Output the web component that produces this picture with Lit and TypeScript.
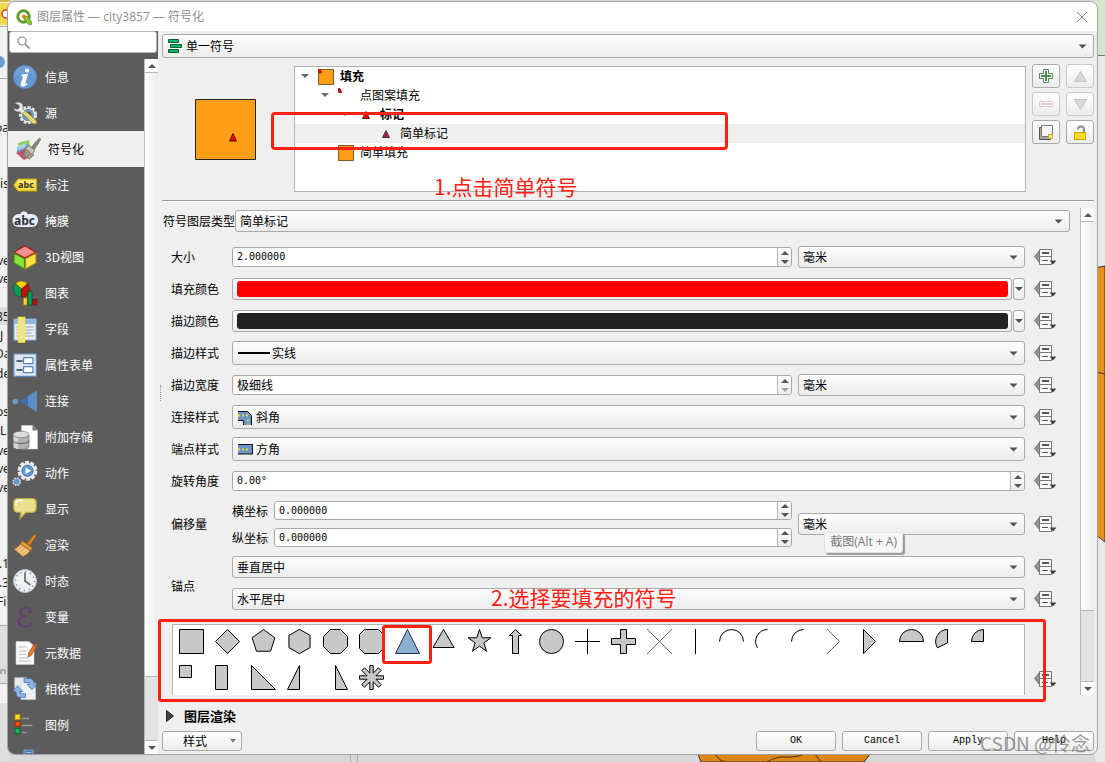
import { LitElement, html, css, svg, nothing } from "lit";
import { customElement, property, state } from "lit/decorators.js";
import { classMap } from "lit/directives/class-map.js";

const base = css`
  *, *::before, *::after { box-sizing: border-box; }
  :host { box-sizing: border-box; font-family: "Noto Sans CJK SC", sans-serif; font-size: 12px; line-height: 16px; color: #000; }
  button, input, select { font: inherit; color: inherit; margin: 0; padding: 0; }
  svg { display: block; flex: none; }
`;

/* ---------- icons ---------- */

const navIcons: Record<string, unknown> = {
  info: svg`<circle cx="12" cy="12" r="11.7" fill="#6597d0" stroke="#4f7fb8" stroke-width=".6"/>
    <path d="M1 12a11 11 0 0 1 22 0c-4-5-14-5-22 0z" fill="#7aa7db" opacity=".5"/>
    <circle cx="14" cy="5.6" r="2.1" fill="#fff"/>
    <path d="M8.500 9.500l6.600-.8-2.800 9.600c-.2.8.3.8 1.600-.2l.6.8c-1.800 1.900-3.500 2.600-5 2.600-1.800 0-2.300-1.100-1.800-2.700l2-6.300c.2-.8-.2-1.200-1.200-1.400z" fill="#fff"/>`,
  source: svg`<circle cx="15" cy="14" r="7.600" fill="none" stroke="#e4e4e4" stroke-width="3" stroke-dasharray="3 1.400"/>
    <circle cx="15" cy="14" r="6.600" fill="#5c5c5c" stroke="#e4e4e4" stroke-width="1.400"/>
    <circle cx="15" cy="14" r="4.600" fill="none" stroke="#6c9bd0" stroke-width="2.200"/>
    <path d="M2 2.500c2-2 6-1.500 7.500 1.200.7 1.500.6 2.800.2 4l3.300 3.300-2.800 2.800-3.200-3.200c-2.400.8-5.500-.2-6.500-3.300l3.700 1.200 2.300-1.800-.4-2.800z" fill="#e9e9e9" stroke="#777" stroke-width=".5"/>
    <path d="M9.500 12.500l3-2.300L23 19.500l.5 3-3.500.3z" fill="#f0e38c" stroke="#9c8b2c" stroke-width=".9"/>
    <path d="M12 13l9 7.500" stroke="#c9b850"/>`,
  symbology: svg`<path d="M2 6l11-3 1 6-11 3z" fill="#8fcb62"/>
    <path d="M1 10l11-3 0 6-11 3z" fill="#69a9d8"/>
    <path d="M0 16l9-4 4 8-5 3z" fill="#c0506f"/>
    <path d="M2 9l8-3-1 5-8 2z" fill="#d9edf8" opacity=".6"/>
    <path d="M9 10.500l9 7.500-4.500 4-7-3.500c2-2 2.500-4 2.500-8z" fill="#a69f8d" stroke="#6f6a5c" stroke-width=".8"/>
    <path d="M11 15l-2.500 4M13.300 16.500l-2.500 4" stroke="#6f6a5c" stroke-width=".8"/>
    <path d="M9.500 11.500l3.500-3 6 5-3 4z" fill="#c8c2b0" stroke="#77715f" stroke-width=".8"/>
    <path d="M15.500 10L23.200 1.200l1.600 1-6.300 10z" fill="#8d8770" stroke="#6f6a5c" stroke-width=".8"/>`,
  labels: svg`<path d="M5 6h18.500v12H5L.7 12z" fill="#f5df3c" stroke="#c59f16" stroke-width="1.200"/>
    <path d="M5.500 7h17v4H3z" fill="#fff27d" opacity=".7"/>
    <text x="5" y="15" class="abc small">abc</text>`,
  mask: svg`<rect x="-.5" y="5" width="25.500" height="13" rx="6" fill="#e7eafb"/>
    <rect x="7.500" y="2.500" width="7" height="8" rx="3" fill="#e7eafb"/>
    <text x="1" y="15.500" class="abc">abc</text>`,
  view3d: svg`<path d="M12 .8l11 6.400L12 13 1 7.200z" fill="#f79092" stroke="#a3181b" stroke-width="1.200"/>
    <path d="M1 8.200l10.500 5.600V24L1 18z" fill="#8be03a" stroke="#4c8a15" stroke-width="1.200"/>
    <path d="M23 8.200l-10.500 5.600V24L23 18z" fill="#fbe347" stroke="#a38c12" stroke-width="1.200"/>`,
  diagrams: svg`<path d="M8.500 8L2.300 2.800A8 8 0 0 1 14.500 2.800z" fill="#f8d100" stroke="#7d6a00" stroke-width=".6"/>
    <path d="M8.500 8L2.300 2.800a8 8 0 0 0 6 13.200z" fill="#0a9b57" stroke="#04502b" stroke-width=".6"/>
    <path d="M8.500 8l6-5.200a8 8 0 0 1-6.200 13.200z" fill="#c11208" stroke="#600903" stroke-width=".6"/>
    <path d="M10.500 17h3.500v7h-3.500z" fill="#fbd52c" stroke="#b38409" stroke-width=".7"/>
    <path d="M15 10.500h4V24h-4z" fill="#0a9b57" stroke="#04502b" stroke-width=".7"/>
    <path d="M19.800 18.500h4V24h-4z" fill="#c11208" stroke="#600903" stroke-width=".7"/>`,
  fields: svg`<path d="M.8 1.800h22.500v21.500H.8z" fill="#e9edf2" stroke="#5f8ab8" stroke-width="1.200"/>
    <path d="M1.500 2.500h21v4.500h-21z" fill="#90b6dc"/>
    <path d="M3.500 10h17M3.500 13h17M3.500 16h15M3.500 19h17" stroke="#94a6ba"/>
    <path d="M5.500.5h6v24.500h-6z" fill="#f0df9a" stroke="#f7ee3a" stroke-width="1.400"/>`,
  form: svg`<path d="M.8.800h22.500v22.500H.8z" fill="#dfe6ee" stroke="#5f8ab8" stroke-width="1.200"/>
    <path d="M3.500 8h6M3.500 17h6" stroke="#5a6673" stroke-width="1.800"/>
    <rect x="10.500" y="4.700" width="9.500" height="6" rx="1" fill="#fff" stroke="#5382b5" stroke-width="1.300"/>
    <rect x="10.500" y="13.700" width="9.500" height="6" rx="1" fill="#fff" stroke="#5382b5" stroke-width="1.300"/>`,
  joins: svg`<circle cx="2.300" cy="12.500" r="2.700" fill="#6b9acb"/>
    <path d="M24 1.500v21.500L6.500 12.300z" fill="#5d8fc5"/><path d="M15 7v10.500l-8.500-5.200z" fill="#3e6fa6"/>`,
  storage: svg`<path d="M8.500.5h11l5 5V24h-16z" fill="#fff" stroke="#d0d0d0" stroke-width=".6"/>
    <path d="M19.500.5l5 5h-5z" fill="#777"/>
    <path d="M0 10v11.500c0 4 16 4 16 0V10z" fill="#b2b2b2" stroke="#666" stroke-width=".7"/>
    <path d="M2 11v12M4 12v12" stroke="#e0e0e0" stroke-width="1.500"/>
    <ellipse cx="8" cy="9.500" rx="8" ry="3.300" fill="#dcdcdc" stroke="#777" stroke-width=".7"/>
    <path d="M0 15.500c0 4 16 4 16 0" fill="none" stroke="#555" stroke-width=".9"/>`,
  actions: svg`<circle cx="14.500" cy="9.800" r="8.700" fill="none" stroke="#ececec" stroke-width="2.600" stroke-dasharray="4 1.470"/>
    <circle cx="14.500" cy="9.800" r="8" fill="#ececec"/>
    <circle cx="14.500" cy="9.800" r="5.700" fill="#6495cc" stroke="#3c6ba0" stroke-width=".8"/>
    <path d="M12.500 6.500l5.500 3.300-5.500 3.300z" fill="#fff"/>
    <circle cx="3.700" cy="20.700" r="3.600" fill="#6495cc" stroke="#dedede" stroke-width="1.500" stroke-dasharray="1.800 1"/>`,
  display: svg`<path d="M5 1.500h14c3 0 4.200 1.500 4.200 4v5.500c0 3-1.500 4.300-4.200 4.300h-6L7 21.500l1-6.200H5C2 15.300.8 14 .8 11V5.500c0-2.500 1.200-4 4.200-4z" fill="#eae08e" stroke="#bfa83e" stroke-width="1.200"/>
    <path d="M3 9V6c0-2 1-2.500 3-2.500h4" fill="none" stroke="#fff" stroke-width="1.300"/>`,
  rendering: svg`<path d="M14 10.500L21.500 1.300l1.800 1.500-6.600 9.500z" fill="#d98a25" stroke="#a5620e" stroke-width=".7"/>
    <path d="M9.500 8l10 7-2 2.500L7.500 10.700z" fill="#e39b3a" stroke="#a5620e" stroke-width=".7"/>
    <path d="M7.300 11l9.500 6.500c-1 2.500-3.500 4.500-7 6L1 16c3-1 5-2.500 6.300-5z" fill="#f4c583" stroke="#b5731d" stroke-width=".9"/>
    <path d="M4 17.500l5-4M6.500 19.500l5-4M9 21.500l4.500-4" stroke="#cf8d3c" stroke-width=".8"/>`,
  temporal: svg`<circle cx="12" cy="12" r="11.400" fill="#f0f2f2" stroke="#c8cccd"/>
    <circle cx="12" cy="12" r="9.400" fill="none" stroke="#5c8fc6" stroke-width="1.600" stroke-dasharray="1.200 3.720"/>
    <path d="M12 3.500V12l5.500 4" fill="none" stroke="#666b6e" stroke-width="1.700"/>`,
  variables: svg`<path d="M18 6C17.500 3.800 16 2.800 13.500 2.800c-4 0-6 1.700-6 4.200 0 2.300 1.700 3.800 4.700 4.200-4 .6-6.500 2.700-6.500 5.600 0 3 2.800 4.500 6.800 4.500 3.500 0 6-1.500 6.500-4.300" fill="none" stroke="#643f6f" stroke-width="2"/>
    <path d="M8.300 4.500c-1.500 2-1 4.500 1.200 6M7 13.500c-2 2-1.700 5 .8 6.500" fill="none" stroke="#643f6f" stroke-width="2.600"/>
    <circle cx="17.200" cy="6.200" r="2" fill="#643f6f"/><path d="M11 11.300h4" stroke="#643f6f" stroke-width="1.800"/>`,
  metadata: svg`<path d="M3 .5h13l5 4.500v18.500H3z" fill="#fafafa" stroke="#ccc" stroke-width=".6"/>
    <path d="M5.500 6h9M5.500 10h9M5.500 13.500h8M5.500 17h9M5.500 20h12" stroke="#c4c4c4" stroke-width="1.200"/>
    <path d="M15.500 12.300L20.500 4l2.800 2-5 8.300-3.200 2z" fill="#e07a34" stroke="#9c4c14" stroke-width=".7"/>
    <path d="M20.500 4l1.200-1.700 2.800 1.800-1.200 1.900z" fill="#c9472c"/>`,
  dependencies: svg`<path d="M1.500.5h12v14h-12z" fill="#e6ebf1"/><path d="M8 6h14.500v16.500H8z" fill="#eef1f4" stroke="#ccc" stroke-width=".5"/>
    <path d="M11 1.500h4.500c4 0 5.500 2 5.500 5.800H24l-5 5.500-5-5.500h3c0-1.300-.8-1.900-2-1.900h-4z" fill="#8db4e6" stroke="#4a75b0" stroke-width=".8"/>
    <path d="M12.500 20.500H8.300c-3.800 0-5.300-2-5.300-6H-.3l5-5.800 5 5.800H6.800c0 1.500.6 2.300 1.800 2.300h3.900z" fill="#8db4e6" stroke="#4a75b0" stroke-width=".8"/>`,
  legend: svg`<path d="M2 1.500h5v5H2z" fill="#fbdc1c" stroke="#c48d00"/>
    <path d="M2 8.500h5v5H2z" fill="#f4500d" stroke="#9c2a00"/>
    <path d="M2 15.500h5v5H2z" fill="#18b35c" stroke="#046b32"/>
    <path d="M9 5.500h7M9 12.500h10.500M9 19.500h4.500" stroke="#9a9a9a" stroke-width="1.500"/>`,
  server: svg`<path d="M11 1h9v8h-9z" fill="#4a78b0" stroke="#7fa9d8"/><path d="M13 3.500h5" stroke="#9fc0e5"/>`,
};

const NAV: [string, string][] = [
  ["info", "信息"], ["source", "源"], ["symbology", "符号化"], ["labels", "标注"], ["mask", "掩膜"],
  ["view3d", "3D视图"], ["diagrams", "图表"], ["fields", "字段"], ["form", "属性表单"], ["joins", "连接"],
  ["storage", "附加存储"], ["actions", "动作"], ["display", "显示"], ["rendering", "渲染"], ["temporal", "时态"],
  ["variables", "变量"], ["metadata", "元数据"], ["dependencies", "相依性"], ["legend", "图例"], ["server", ""],
];

/* Marker shapes in a 27-unit box centred on 13.5. */
const poly = (n: number, r: number, turn = -90) =>
  Array.from({ length: n }, (_, i) => {
    const a = ((turn + (360 / n) * i) * Math.PI) / 180;
    return `${13.5 + r * Math.cos(a)},${13.5 + r * Math.sin(a)}`;
  }).join(" ");
const starPoints = Array.from({ length: 10 }, (_, i) => {
  const a = ((-90 + 36 * i) * Math.PI) / 180;
  const r = i % 2 ? 4.6 : 12;
  return `${13.5 + r * Math.cos(a)},${13.5 + r * Math.sin(a)}`;
}).join(" ");

const SHAPES: [string, unknown][] = [
  ["square", svg`<path d="M1.500 1.500h24v24h-24z"/>`],
  ["diamond", svg`<path d="M13.500 1.500l12 12-12 12-12-12z"/>`],
  ["pentagon", svg`<polygon points=${poly(5, 12)}/>`],
  ["hexagon", svg`<polygon points=${poly(6, 12.2)}/>`],
  ["octagon", svg`<path d="M8.500 1.500h10l7 7v10l-7 7h-10l-7-7v-10z"/>`],
  ["square with corners", svg`<path d="M6.500 1.500h14l5 5v14l-5 5h-14l-5-5v-14z"/>`],
  ["triangle", svg`<path d="M13.500 1.500l12 24h-24z"/>`],
  ["equilateral triangle", svg`<path d="M13.500 1.500l10.500 18H3z"/>`],
  ["star", svg`<polygon points=${starPoints}/>`],
  ["arrow", svg`<path d="M13.500 1.500l6 6h-3v18h-6v-18h-3z"/>`],
  ["circle", svg`<circle cx="13.500" cy="13.500" r="12"/>`],
  ["cross", svg`<path d="M13.500 1v25M1 13.500h25"/>`],
  ["filled cross", svg`<path d="M10.500 1.500h6v9h9v6h-9v9h-6v-9h-9v-6h9z"/>`],
  ["x", svg`<path class="thin" d="M1 1l25 25M26 1L1 26"/>`],
  ["line", svg`<path d="M13.500 1v25"/>`],
  ["half arc", svg`<path class="open" d="M1.500 13.500a12 12 0 0 1 24 0"/>`],
  ["third arc", svg`<path class="open" d="M13.500 1.500A12 12 0 0 0 3.500 19.800"/>`],
  ["quarter arc", svg`<path class="open" d="M13.500 1.500a12 12 0 0 0-12 12"/>`],
  ["arrowhead", svg`<path class="open thin" d="M1 1l12.500 12.500L1 26"/>`],
  ["filled arrowhead", svg`<path d="M1.500 1.500l12 12-12 12z"/>`],
  ["semi circle", svg`<path d="M1.500 13.500a12 12 0 0 1 24 0z"/>`],
  ["third circle", svg`<path d="M13.500 1.500A12 12 0 0 0 3.500 19.800l10-5z"/>`],
  ["quarter circle", svg`<path d="M13.500 1.500a12 12 0 0 0-12 12h12z"/>`],
  ["quarter square", svg`<path d="M1.500 1.500h12v12h-12z"/>`],
  ["half square", svg`<path d="M1.500 1.500h12v24h-12z"/>`],
  ["diagonal half square", svg`<path d="M1.500 1.500l24 24h-24z"/>`],
  ["right half triangle", svg`<path d="M13.500 1.500v24h-12z"/>`],
  ["left half triangle", svg`<path d="M13.500 1.500v24h12z"/>`],
  ["asterisk", svg`<path d="M11.800 1.500h3.400v7.600l5.300-5.300 2.700 2.700-5.300 5.300h7.600v3.400h-7.600l5.300 5.300-2.700 2.700-5.300-5.300v7.600h-3.400v-7.600l-5.300 5.300-2.700-2.700 5.300-5.300H1.500v-3.400h7.600L3.800 6.500l2.700-2.700 5.300 5.300z"/>`],
];

const joinIcon = html`<svg width="15" height="15" viewBox="0 0 15 15"><path d="M0 1h9l5 5v9H6V10H0z" fill="#6d94c8"/><path d="M0 1.500h9.500l4 4V15M0 10.500h5.500V15" fill="none" stroke="#111"/><path d="M0 5.500h11M10 9.500v5" stroke="#f0dc2a" stroke-width="2" stroke-dasharray="2 2"/></svg>`;
const capIcon = html`<svg width="15" height="11" viewBox="0 0 15 11"><path d="M0 .500h14.500v9.500H0" fill="#6d94c8" stroke="#111"/><path d="M0 5.500h11" stroke="#f0dc2a" stroke-width="2" stroke-dasharray="2 2"/></svg>`;
const lineIcon = html`<svg width="32" height="2"><path d="M0 1h32" stroke="#000" stroke-width="2"/></svg>`;
const singleIcon = html`<svg width="14" height="14" viewBox="0 0 14 14"><g fill="#12b768" stroke="#0a5c36"><path d="M.5.500h10v3H.5zM2.500 5.500h11v3h-11zM.5 10.500h10v3H.5z"/></g></svg>`;

/* ---------- controls ---------- */

@customElement("combo-box")
class ComboBox extends LitElement {
  @property() value = "";
  @property() name = "";
  @property({ attribute: false }) icon: unknown = nothing;
  static styles = [base, css`
    :host { display: grid; align-items: center; min-width: 0; height: 22px; }
    :host([tall]) { height: 24px; }
    select, .icon, .arrow { grid-area: 1 / 1; }
    select { appearance: none; width: 100%; height: 100%; padding: 0 20px 0 4px; border: 1px solid #a9a9a9; border-radius: 3px;
      background: linear-gradient(#fefefe, #ececec); outline: none; }
    .i14 { padding-left: 23px; } .i32 { padding-left: 39px; }
    .icon { margin-left: 6px; pointer-events: none; justify-self: start; }
    .arrow { justify-self: end; margin-right: 7px; pointer-events: none; }
  `];
  render() {
    const wide = this.icon === lineIcon;
    return html`<select aria-label=${this.name} class=${classMap({ i14: this.icon !== nothing && !wide, i32: wide })}>
        <option>${this.value}</option></select>
      <span class="icon">${this.icon}</span>
      <svg class="arrow" width="9" height="5"><path d="M.5.500h8l-4 4z" fill="#555"/></svg>`;
  }
}

@customElement("spin-box")
class SpinBox extends LitElement {
  @property() value = "";
  @property() name = "";
  @property({ type: Boolean }) cjk = false;
  @property({ type: Boolean }) floor = false;
  static styles = [base, css`
    :host { display: flex; min-width: 0; height: 20px; border: 1px solid #a9a9a9; border-radius: 3px; background: #fff; overflow: hidden; }
    :host([short]) { height: 19px; }
    input { flex: 1; min-width: 0; border: 0; padding: 0 4px; background: none; outline: none; font-family: "DejaVu Sans Mono", monospace; font-size: 10px; }
    input.cjk { font-family: inherit; font-size: 12px; }
    .steps { display: grid; width: 14px; border-left: 1px solid #b5b5b5; background: linear-gradient(#fefefe, #ececec); }
    .steps button { border: 0; background: none; display: grid; place-items: center; min-height: 0; }
    .off { opacity: .5; }
  `];
  render() {
    return html`<input type="text" class=${classMap({ cjk: this.cjk })} aria-label=${this.name} .value=${this.value}>
      <div class="steps">
        <button aria-label="+"><svg width="8" height="4"><path d="M0 4h8L4 0z" fill="#555"/></svg></button>
        <button aria-label="-" class=${classMap({ off: this.floor })}><svg width="8" height="4"><path d="M0 0h8L4 4z" fill="#555"/></svg></button>
      </div>`;
  }
}

@customElement("color-field")
class ColorField extends LitElement {
  @property() color = "";
  @property() name = "";
  static styles = [base, css`
    :host { display: flex; gap: 1px; height: 22px; }
    button { border: 1px solid #a9a9a9; border-radius: 3px; background: linear-gradient(#fefefe, #ececec); }
    .swatch { flex: 1; padding: 2px 3px 2px 4px; display: flex; }
    .fill { flex: 1; align-self: stretch; border-radius: 3px; }
    .more { width: 12px; display: grid; place-items: center; }
  `];
  render() {
    return html`<button class="swatch" aria-label=${this.name}><span class="fill" style="background:${this.color}"></span></button>
      <button class="more" aria-label="${this.name} menu"><svg width="8" height="4"><path d="M0 0h8L4 4z" fill="#555"/></svg></button>`;
  }
}

@customElement("override-button")
class OverrideButton extends LitElement {
  static styles = [base, css`
    :host { display: block; }
    button { display: block; border: 0; background: none; }
  `];
  render() {
    return html`<button aria-label="数据定义覆盖"><svg width="23" height="18" viewBox="0 0 23 18">
      <path d="M5.500 2.500v12L.5 8.500z" fill="#929699" stroke="#777"/>
      <path d="M5.500 1.500h12v15h-12z" fill="#fbfbfb" stroke="#777"/><path d="M5.500 8.500h12" stroke="#777"/>
      <path d="M8 5h7" stroke="#555" stroke-width="2"/><path d="M8 12.500h6" stroke="#555"/>
      <path d="M15.500 12.500h7l-3.500 4z" fill="#444"/></svg></button>`;
  }
}

@customElement("scroll-track")
class ScrollTrack extends LitElement {
  static styles = [base, css`
    :host { display: flex; flex-direction: column; width: 14px; flex: none; border-left: 1px solid #b9b9b9; background: #e2e2e2; }
    button { height: 14px; flex: none; border: 0; background: #fdfdfd; display: grid; place-items: center; }
    .up { border-bottom: 1px solid #b9b9b9; } .down { border-top: 1px solid #b9b9b9; }
    .thumb { flex: var(--thumb, 11); background: linear-gradient(90deg, #fdfdfd, #ededed); border-bottom: 1px solid #b9b9b9; }
    .rest { flex: 2; }
  `];
  render() {
    return html`<button class="up" aria-label="up"><svg width="8" height="4"><path d="M0 4h8L4 0z" fill="#555"/></svg></button>
      <div class="thumb"></div><div class="rest"></div>
      <button class="down" aria-label="down"><svg width="8" height="4"><path d="M0 0h8L4 4z" fill="#555"/></svg></button>`;
  }
}

/* ---------- side navigation ---------- */

@customElement("side-nav")
class SideNav extends LitElement {
  @state() private current = "symbology";
  static styles = [base, css`
    :host { display: flex; flex-direction: column; width: 150px; flex: none; background: #5c5c5c; min-height: 0; }
    .search { display: flex; align-items: center; gap: 4px; height: 22px; margin: 0 1px 6px; padding: 0 7px; background: #fff; border: 1px solid #b5b5b5; border-radius: 3px; flex: none; }
    .search input { min-width: 0; flex: 1; border: 0; outline: none; background: none; }
    .body { display: flex; flex: 1; min-height: 0; }
    .body scroll-track { --thumb: 19; }
    nav { flex: 1; min-height: 0; overflow: hidden; }
    .item { display: flex; align-items: center; gap: 8px; width: 100%; height: 36px; padding: 0 0 0 5px; border: 0; background: none; color: #fff; text-align: left; }
    .item svg { overflow: visible; }
    .item.on { background: #efefef; color: #000; padding-left: 8px; }
    .abc { font: bold 12px "Open Sans", sans-serif; fill: #333; }
    .abc.small { font-size: 9px; }
  `];
  render() {
    return html`<label class="search"><svg width="13" height="13" viewBox="0 0 13 13"><circle cx="5" cy="5" r="4" fill="none" stroke="#8a8a8a" stroke-width="1.200"/><path d="M8 8l4.500 4.500" stroke="#8a8a8a" stroke-width="1.600"/></svg>
        <input type="text" aria-label="搜索"></label>
      <div class="body"><nav>${NAV.map(([id, text]) => html`
        <button class=${classMap({ item: true, on: id === this.current })} @click=${() => (this.current = id)}>
          <svg width="24" height="24" viewBox="0 0 24 24">${navIcons[id]}</svg><span>${text}</span></button>`)}</nav>
        <scroll-track></scroll-track></div>`;
  }
}

/* ---------- symbol tree ---------- */

const fillSwatch = html`<svg width="16" height="16"><path d="M.5.500h15v15H.5z" fill="#ff9e17" stroke="#7d5a20"/></svg>`;
const dotSwatch = html`<svg width="16" height="16"><path d="M.5.500h15v15H.5z" fill="#ff9e17" stroke="#7d5a20"/><path d="M0 0h2l2 4H0z" fill="#e00" stroke="#801010" stroke-width=".5"/></svg>`;
const pointSwatch = html`<svg width="16" height="16"><path d="M.5.500h1.500l2 4H.5z" fill="#e00" stroke="#501018" stroke-width=".7"/></svg>`;
const marker = (c: string, s: string) => html`<svg width="16" height="16"><path d="M8 4.500l3.500 7h-7z" fill=${c} stroke=${s}/></svg>`;

const TREE: { level: number; text: string; icon: unknown; open?: boolean; bold?: boolean; on?: boolean }[] = [
  { level: 0, text: "填充", icon: dotSwatch, open: true, bold: true },
  { level: 1, text: "点图案填充", icon: pointSwatch, open: true },
  { level: 2, text: "标记", icon: marker("#f00", "#6b2020"), open: true, bold: true },
  { level: 3, text: "简单标记", icon: marker("#b81f43", "#343b63"), on: true },
  { level: 1, text: "简单填充", icon: fillSwatch },
];

@customElement("symbol-header")
class SymbolHeader extends LitElement {
  static styles = [base, css`
    :host { display: flex; align-items: flex-start; position: relative; padding-top: 6px; border-bottom: 1px solid #9b9b9b; padding-bottom: 8px; box-shadow: 0 1px #fff; }
    .preview { width: 132px; display: flex; justify-content: center; padding: 35px 6px 0 0; flex: none; }
    ul { list-style: none; margin: 2px 6px 0 0; padding: 0 0 29px; flex: 1; border: 1px solid #b2b2b2; background: #fff; min-width: 0; }
    li { display: flex; align-items: center; height: 19px; padding-left: 6px; line-height: 14px; }
    li.on { background: #efefef; }
    li.bold { font-weight: bold; }
    .pad { width: 20px; flex: none; }
    .tw { width: 17px; flex: none; }
    .tx { margin-left: 6px; padding-bottom: 2px; }
    .tools { display: grid; grid-template-columns: 28px 28px; gap: 4px 6px; }
    .tools button { height: 24px; display: grid; place-items: center; border: 1px solid #a9a9a9; border-radius: 3px; background: linear-gradient(#fefefe, #ececec); }
    .tools button:disabled { border-color: #cbcbcb; }
    .frame { position: absolute; left: 109px; top: 54px; width: 457px; height: 38px; border: 3px solid #ff2012; border-radius: 4px; pointer-events: none; }
    .note { position: absolute; left: 272px; top: 114px; font-size: 21px; line-height: 28px; color: #ff2012; }
  `];
  render() {
    return html`<div class="preview"><svg width="61" height="61"><path d="M.5.500h60v60H.5z" fill="#ff9e17" stroke="#232323"/><path d="M38 34.500l3.500 7.500h-7z" fill="#f00" stroke="#4a1515"/></svg></div>
      <ul role="tree">${TREE.map((n) => html`<li role="treeitem" class=${classMap({ on: !!n.on, bold: !!n.bold })}>
        ${Array.from({ length: n.level }, () => html`<span class="pad"></span>`)}
        <span class="tw">${n.open ? html`<svg width="8" height="5"><path d="M0 0h8L4 4z" fill="#666"/></svg>` : nothing}</span>
        ${n.icon}<span class="tx">${n.text}</span></li>`)}</ul>
      <div class="tools">
        <button aria-label="添加"><svg width="14" height="14"><path d="M4.500.500h5v4h4v5h-4v4h-5v-4h-4v-5h4z" fill="#fff" stroke="#4c8a50"/><path d="M7 2v10M2 7h10" stroke="#4c8a50" stroke-width="2"/></svg></button>
        <button disabled aria-label="上移"><svg width="15" height="13"><path d="M7.500 1.500l6 10h-12z" fill="#d6d9dc" stroke="#bfc2c5"/></svg></button>
        <button disabled aria-label="删除"><svg width="14" height="6"><path d="M.5.500h13v5H.5z" fill="#fff" stroke="#e0cccc"/><path d="M2 3h10" stroke="#e0cccc" stroke-width="2"/></svg></button>
        <button disabled aria-label="下移"><svg width="15" height="13"><path d="M7.500 11.500l6-10h-12z" fill="#d6d9dc" stroke="#bfc2c5"/></svg></button>
        <button aria-label="复制"><svg width="15" height="15"><path d="M.5 2.500h11v12H.5z" fill="#a8a89a" stroke="#555"/><path d="M2.500.500h11v11h-11z" fill="#f5f5f5" stroke="#777"/><path d="M9.500 9.500h4v4h-4z" fill="#fbe9a0" stroke="#d3a514"/></svg></button>
        <button aria-label="锁定"><svg width="13" height="15"><path d="M4 4.500C4 .500 10 .500 10 4.500V7" fill="none" stroke="#8f8f8f" stroke-width="2"/><path d="M.5 7.500h11v7H.5z" fill="#f5dc1e" stroke="#cba40c"/></svg></button>
      </div>
      <div class="frame"></div><div class="note">1.点击简单符号</div>`;
  }
}

/* ---------- marker form ---------- */

@customElement("marker-form")
class MarkerForm extends LitElement {
  @state() private shape = "triangle";
  static styles = [base, css`
    :host { display: flex; flex: 1; min-height: 0; position: relative; }
    .view { flex: 1; min-width: 0; overflow: hidden; padding: 2px 10px 0 0; }
    .type { display: flex; align-items: center; margin-bottom: 9px; padding-left: 1px; white-space: nowrap; }
    .type combo-box { flex: 1; }
    .row { display: grid; grid-template-columns: 52px minmax(0, 1fr) 36px; column-gap: 9px; align-items: center; min-height: 32px; padding-left: 9px; }
    .row.anchor { grid-template-rows: 32px 32px; }
    .row.anchor .label { grid-row: 1 / 3; padding-top: 6px; }
    .label { white-space: nowrap; }
    .pair { display: grid; grid-template-columns: minmax(0, 1fr) 227px; gap: 6px; align-items: center; }
    .xy { display: grid; grid-template-columns: 36px minmax(0, 1fr); gap: 8px 6px; align-items: center; padding: 4px 0; }
    .shapes { display: grid; grid-template-columns: minmax(0, 1fr) 36px; column-gap: 9px; align-items: center; padding-left: 10px; margin-top: 9px; }
    .list { display: flex; flex-wrap: wrap; align-content: flex-start; height: 110px; background: #fff; border: 1px solid #b2b2b2; }
    .cell { width: 36px; height: 36px; padding: 3px 0 0 5px; border: 0; background: none; display: flex; position: relative; }
    .cell svg { fill: #c8c8c8; stroke: #000; stroke-width: 1; }
    .cell.on svg { fill: #8cafd0; stroke: #1c3652; }
    .open { fill: none; } .thin { stroke: #666; }
    .cell.on::after { content: ""; position: absolute; left: -7px; top: 0; width: 50px; height: 39px; border: 3px solid #ff2012; border-radius: 3px; z-index: 1; }
    .frame { position: absolute; left: -4px; right: 48px; bottom: -7px; height: 83px; border: 3px solid #ff2012; border-radius: 3px; pointer-events: none; }
    .note { position: absolute; left: 329px; top: 375px; font-size: 21px; line-height: 28px; color: #ff2012; }
    .tip { position: absolute; right: 191px; top: 324px; padding: 1px 5px 2px; border: 1px solid #e2e2e2; border-radius: 3px; background: #f7f7f7; box-shadow: 2px 2px 1px #999; color: #777; white-space: nowrap; font-family: "Open Sans", "Noto Sans CJK SC", sans-serif; }
  `];
  private row(label: string, field: unknown) {
    return html`<div class="row"><span class="label">${label}</span>${field}<override-button></override-button></div>`;
  }
  render() {
    return html`<div class="view">
      <div class="type"><span>符号图层类型</span><combo-box name="符号图层类型" value="简单标记"></combo-box></div>
      ${this.row("大小", html`<div class="pair"><spin-box name="大小" value="2.000000"></spin-box><combo-box name="大小单位" value="毫米"></combo-box></div>`)}
      ${this.row("填充颜色", html`<color-field name="填充颜色" color="#ff0000"></color-field>`)}
      ${this.row("描边颜色", html`<color-field name="描边颜色" color="#232323"></color-field>`)}
      ${this.row("描边样式", html`<combo-box tall name="描边样式" value="实线" .icon=${lineIcon}></combo-box>`)}
      ${this.row("描边宽度", html`<div class="pair"><spin-box cjk floor name="描边宽度" value="极细线"></spin-box><combo-box name="宽度单位" value="毫米"></combo-box></div>`)}
      ${this.row("连接样式", html`<combo-box tall name="连接样式" value="斜角" .icon=${joinIcon}></combo-box>`)}
      ${this.row("端点样式", html`<combo-box tall name="端点样式" value="方角" .icon=${capIcon}></combo-box>`)}
      ${this.row("旋转角度", html`<spin-box name="旋转角度" value="0.00°"></spin-box>`)}
      ${this.row("偏移量", html`<div class="pair"><div class="xy">
          <span>横坐标</span><spin-box short name="横坐标" value="0.000000"></spin-box>
          <span>纵坐标</span><spin-box short name="纵坐标" value="0.000000"></spin-box></div>
        <combo-box name="偏移单位" value="毫米"></combo-box></div>`)}
      <div class="row anchor"><span class="label">锚点</span>
        <combo-box name="垂直锚点" value="垂直居中"></combo-box><override-button></override-button>
        <combo-box name="水平锚点" value="水平居中"></combo-box><override-button></override-button></div>
      <div class="shapes"><div class="list">${SHAPES.map(([id, g]) => html`
        <button class=${classMap({ cell: true, on: id === this.shape })} aria-label=${id} @click=${() => (this.shape = id)}>
          <svg width="27" height="27" viewBox="0 0 27 27">${g}</svg></button>`)}</div>
        <override-button></override-button></div>
    </div>
    <scroll-track></scroll-track>
    <div class="tip">截图(Alt + A)</div><div class="note">2.选择要填充的符号</div><div class="frame"></div>`;
  }
}

/* ---------- desktop behind the dialog ---------- */

const LEFT_TEXT: [number, string, number][] = [
  [132, "oa", -5], [188, "lis", -3], [265, "ve", -3], [283, "ve", -3], [321, "85", -4], [340, "J", 0], [358, "Da", -5], [378, "de", -4],
  [416, "os", -4], [435, "L", 0], [455, "ve", -3], [473, "ve", -3], [492, "ve", -3], [568, ".1", -1], [587, ".3", -1], [606, "Fil", -3],
];

@customElement("desktop-backdrop")
class DesktopBackdrop extends LitElement {
  static styles = [base, css`
    :host { position: absolute; inset: 0; display: flex; justify-content: space-between; background: #d9d9d9; overflow: hidden; }
    .edge { width: 10px; height: 100%; }
    .mid { position: absolute; left: 340px; bottom: 0; }
    .t { font: 12px "Noto Sans", sans-serif; fill: #222; }
  `];
  render() {
    return html`<svg class="edge"><path d="M0 0h10v762H0z" fill="#f1f1f1"/>
        <path d="M0 0h10v2H0z" fill="#d5b93a"/><path d="M0 3h9v22H0z" fill="#f4d94a"/><circle cx="6" cy="14" r="4" fill="#fff" stroke="#d33" stroke-width="1.500"/>
        <path d="M0 26.500h10M0 78.500h10M0 625.500h10M0 683.500h10" stroke="#aaa"/>
        <circle cx="-1" cy="62" r="6" fill="#6b9acb"/><path d="M0 307h10v18H0z" fill="#dcdcdc"/>
        <path d="M0 626h10v57H0zM0 703h10v60H0z" fill="#dedede"/><path d="M1 674v-4h4v4" fill="none" stroke="#999" stroke-width="1.500"/>
        ${LEFT_TEXT.map(([y, t, x]) => svg`<text class="t" x=${x} y=${y}>${t}</text>`)}</svg>
      <svg class="mid" width="540" height="8"><path d="M10.500 0v8M17.500 0v8" stroke="#aaa"/><path d="M358 0h172l-6 8H361z" fill="#de8612" stroke="#333"/><path d="M375 0q4 7 10 8M427 8q10-6 18-5t20-3M475 0l6 8" fill="none" stroke="#443010"/></svg>
      <svg class="edge"><path d="M0 0h10v762H0z" fill="#e9e9e9"/><path d="M0 0h10v55H0z" fill="#d5e6cd"/><path d="M0 55.500h10" stroke="#777"/>
        <path d="M0 268l10-2v276l-10-8z" fill="#e8911a" stroke="#333"/><path d="M0 373q5-1 10 1" stroke="#333" fill="none"/></svg>`;
  }
}

/* ---------- dialog ---------- */

@customElement("app-root")
class AppRoot extends LitElement {
  static styles = [base, css`
    :host { display: flex; position: relative; height: 100vh; min-height: 600px; padding: 1px 7px 7px; overflow: hidden; }
    .dialog { position: relative; flex: 1; min-width: 0; display: flex; flex-direction: column; border: 1px solid #a2a2a2; border-radius: 8px; background: #efefef; overflow: hidden; }
    header { display: flex; align-items: center; gap: 5px; height: 29px; flex: none; padding: 0 9px 0 8px; background: #fff; color: #8f8f8f; }
    header span { flex: 1; font-family: "Open Sans", "Noto Sans CJK SC", sans-serif; }
    header button { border: 0; background: none; }
    .body { display: flex; flex: 1; min-height: 0; }
    main { flex: 1; min-width: 0; display: flex; flex-direction: column; padding: 3px 3px 3px 4px; }
    .split { width: 3px; height: 16px; align-self: center; margin-right: -3px; border-right: 1px dotted #999; }
    symbol-header { margin-bottom: 7px; flex: none; }
    .group { display: flex; align-items: center; gap: 10px; height: 36px; padding: 5px 0 0 4px; flex: none; border: 0; background: none; font-weight: bold; font-size: 13px; }
    footer { display: flex; gap: 6px; flex: none; position: relative; }
    footer button { width: 80px; height: 20px; border: 1px solid #a9a9a9; border-radius: 3px; background: linear-gradient(#fefefe, #ececec); font-family: "Liberation Mono", "Noto Sans CJK SC", monospace; font-size: 10px; }
    footer .style { display: flex; align-items: center; margin-right: auto; padding: 0 4px 0 20px; justify-content: space-between; font-family: inherit; font-size: 12px; }
    .mark { position: absolute; right: 4px; bottom: -6px; font-size: 19px; line-height: 28px; color: rgba(120, 120, 120, .75); pointer-events: none; }
  `];
  render() {
    return html`<desktop-backdrop></desktop-backdrop>
      <div class="dialog">
        <header><svg width="16" height="16" viewBox="0 0 16 16"><circle cx="7.500" cy="7.500" r="5.700" fill="none" stroke="#5f9e2c" stroke-width="3"/><path d="M8 8l2.500-1L16 13v2.500h-3.500L8 11z" fill="#8cc63e" stroke="#4f8a24" stroke-width=".6"/><circle cx="8" cy="7.500" r="2" fill="#ee7913"/></svg>
          <span>图层属性 — city3857 — 符号化</span>
          <button aria-label="关闭"><svg width="12" height="12"><path d="M1 1l10 10M11 1L1 11" stroke="#8a8a8a"/></svg></button></header>
        <div class="body"><side-nav></side-nav><div class="split"></div>
          <main>
            <combo-box tall name="渲染器" value="单一符号" .icon=${singleIcon}></combo-box>
            <symbol-header></symbol-header>
            <marker-form></marker-form>
            <button class="group"><svg width="8" height="12"><path d="M.5.500v11l7-5.500z" fill="#444" stroke="#222"/></svg><span>图层渲染</span></button>
            <footer><button class="style"><span>样式</span><svg width="7" height="4"><path d="M0 0h6L3 3.500z" fill="#777"/></svg></button>
              <button>OK</button><button>Cancel</button><button>Apply</button><button>Help</button>
              <div class="mark">CSDN @怜念</div></footer>
          </main></div>
      </div>`;
  }
}
